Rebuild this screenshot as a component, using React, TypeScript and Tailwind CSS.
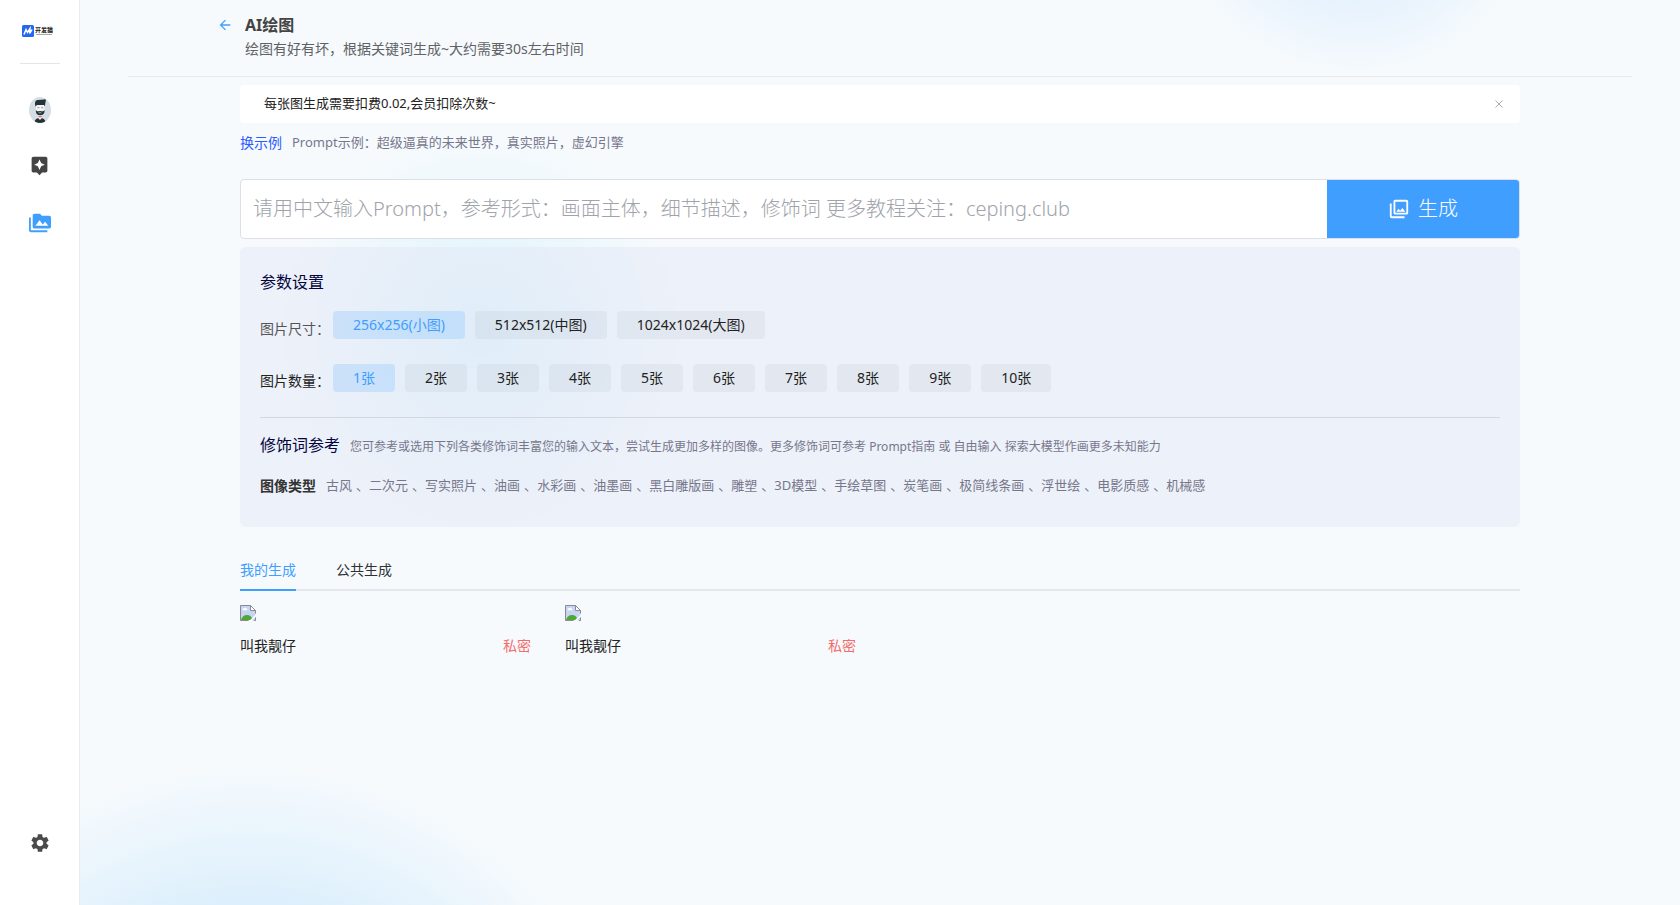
import { useState } from "react";
import { MdArrowBack, MdAssistant, MdOutlinePhotoLibrary, MdPermMedia, MdSettings } from "react-icons/md";

const sizes = ["256x256(小图)", "512x512(中图)", "1024x1024(大图)"];
const counts = [1, 2, 3, 4, 5, 6, 7, 8, 9, 10];
const imageTypes = [
  "古风", "二次元", "写实照片", "油画", "水彩画", "油墨画", "黑白雕版画", "雕塑",
  "3D模型", "手绘草图", "炭笔画", "极简线条画", "浮世绘", "电影质感", "机械感",
];
const works = [
  { id: 1, author: "叫我靓仔", status: "私密" },
  { id: 2, author: "叫我靓仔", status: "私密" },
];

function Logo() {
  return (
    <div className="flex items-center gap-px" aria-label="开发猫">
      <svg viewBox="0 0 12 12" className="size-3">
        <rect width="12" height="12" rx="1.5" fill="#2468f2" />
        <path d="M2 9.5 4 4.5 5.5 7.5 8 3.5 7.8 8.5 10 4.5" fill="none" stroke="#fff" strokeWidth="1.5" />
      </svg>
      <div className="flex flex-col items-center">
        <span className="text-[6px] font-bold leading-[7px] text-[#222]">开发猫</span>
        <span className="h-px w-4 bg-[#aaa]" />
      </div>
    </div>
  );
}

function Avatar() {
  return (
    <svg viewBox="0 0 22 26" className="h-[26px] w-[22px]" aria-label="头像" role="img">
      <clipPath id="face-clip"><ellipse cx="11" cy="13" rx="11" ry="13" /></clipPath>
      <g clipPath="url(#face-clip)">
        <rect width="22" height="26" fill="#d6dee5" />
        <path d="M5.500 26c0-3.500 2-5 5.500-5s5.500 1.500 5.500 5z" fill="#263238" />
        <path d="M9 17h4v4l-2 2-2-2z" fill="#eee" />
        <path d="M7 7h8.500v7c0 3-2 4.500-4.200 4.500S7 17 7 14z" fill="#f3f3f3" />
        <path d="M8.500 10.700h1.800M12.300 10.700h1.800" stroke="#777" strokeWidth=".8" />
        <path d="M6.800 13c1.500 2 2.500 1 4.300 1s3 1 4.500-1c.2 3.500-1.500 5.300-4.500 5.300S6.600 16.500 6.800 13z" fill="#263238" />
        <path d="M9.500 15.800h3" stroke="#ddd" strokeWidth=".7" />
        <path d="M9.500 19h3.200v1.300H9.500z" fill="#e0704a" />
        <path d="M6.500 9.500C5.300 5 6.500 3 9 3l6-.5c2-.8 2.200 1 1.500 2.500L15.800 9.500 15 8H8z" fill="#263238" />
      </g>
    </svg>
  );
}

function BrokenImage() {
  return (
    <svg viewBox="0 0 16 16" className="size-4" role="img" aria-label="图片">
      <path d="M.5.5h10l5 5v10H.5z" fill="#c6d5f5" />
      <path d="M2.500 4.500c0-1 1-1.500 1.800-1.200.6-1 2.200-.6 2.300.5 1 0 1.200 1.200.4 1.400H3c-.4 0-.5-.4-.5-.7z" fill="#fff" />
      <path d="M1 15c1-4 4-5.500 7-5 2 .3 3.500 1.500 5 5z" fill="#4ea832" />
      <path d="M.5 15.500V.5h10l5 5v3M.5 15.500h8M14 15.500h1.500v-3" fill="none" stroke="#8b8b8b" />
      <path d="M10.500.5v5h5z" fill="#fff" stroke="#8b8b8b" />
      <path d="m9 16 7-6.500V11l-4.500 5z" fill="#fff" />
    </svg>
  );
}

type ChipProps = { label: string; active: boolean; onClick: () => void };

function Chip({ label, active, onClick }: ChipProps) {
  return (
    <button
      type="button"
      aria-pressed={active}
      onClick={onClick}
      className={
        active
          ? "h-7 rounded bg-[#409eff]/18 px-5 text-sm text-[#409eff]"
          : "h-7 rounded bg-[#78828c]/8 px-5 text-sm text-[#222]"
      }
    >
      {label}
    </button>
  );
}

export default function App() {
  const [size, setSize] = useState(sizes[0]);
  const [count, setCount] = useState(1);
  const [tab, setTab] = useState("我的生成");
  const [notice, setNotice] = useState(true);

  return (
    <div className="flex min-h-screen bg-[#f6fafd] font-['Noto_Sans','Noto_Sans_CJK_SC',sans-serif] text-[#222]">
      <aside className="flex w-20 shrink-0 flex-col items-center border-r border-[#ebebeb] bg-white pt-6 pb-[51px]">
        <a href="#home" className="flex h-[39px] items-start pt-px pr-1"><Logo /></a>
        <div className="h-px w-10 bg-[#e5e5e5]" />
        <nav className="flex flex-1 flex-col items-center pt-[33px]">
          <a href="#profile"><Avatar /></a>
          <a href="#chat" aria-label="对话" className="mt-8 text-[#444]"><MdAssistant size={21} /></a>
          <a href="#images" aria-label="绘图" className="mt-9 text-[#409eff]"><MdPermMedia size={22} /></a>
          <a href="#settings" aria-label="设置" className="mt-auto text-[#4a4a4a]"><MdSettings size={22} /></a>
        </nav>
      </aside>

      <main className="min-w-0 flex-1 bg-[radial-gradient(circle_at_170px_calc(100%+251px),#dceffc_251px,#f6fafd_391px,transparent_392px),radial-gradient(circle_at_1275px_-112px,#e6f2fd_112px,transparent_187px),radial-gradient(circle_at_400px_330px,#dcf3fc,transparent_200px)] px-12">
        <header className="flex h-[77px] items-start border-b border-[#e7eaed] pt-3 pl-[89px]">
          <a href="#back" aria-label="返回" className="mt-[5px] text-[#409eff]"><MdArrowBack size={16} /></a>
          <div className="ml-3">
            <h1 className="text-base leading-[26px] font-bold text-[#444]">AI绘图</h1>
            <p className="text-sm leading-[22px] text-[#606266]">绘图有好有坏，根据关键词生成~大约需要30s左右时间</p>
          </div>
        </header>

        <div className="mx-auto max-w-[1280px] pt-2">
          {notice && (
            <div className="flex h-[38px] items-center justify-between rounded bg-white pr-4 pl-6">
              <p className="text-[13px]">每张图生成需要扣费0.02,会员扣除次数~</p>
              <button type="button" aria-label="关闭" onClick={() => setNotice(false)} className="p-px text-[#a8abb2]">
                <svg viewBox="0 0 8 8" className="size-2"><path d="m.5.5 7 7m0-7-7 7" stroke="currentColor" /></svg>
              </button>
            </div>
          )}
          <div className="flex h-10 items-center gap-[10px]">
            <button type="button" className="text-sm text-[#2b5cff]">换示例</button>
            <p className="text-[13px] text-[#77778c]">Prompt示例：超级逼真的未来世界，真实照片，虚幻引擎</p>
          </div>

          <form className="mt-4 flex h-[60px] overflow-hidden rounded border border-[#dcdfe6] bg-white" onSubmit={(e) => e.preventDefault()}>
            <input
              aria-label="Prompt"
              className="min-w-0 flex-1 px-3 text-xl font-light outline-none placeholder:text-[#a0a3aa]"
              placeholder="请用中文输入Prompt，参考形式：画面主体，细节描述，修饰词 更多教程关注：ceping.club"
            />
            <button type="submit" className="flex w-48 items-center justify-center gap-2 bg-[#409eff] text-xl font-light text-white">
              <MdOutlinePhotoLibrary size={22} />生成
            </button>
          </form>

          <section className="mt-2 rounded-md bg-[#e4e7f5]/50 px-5 pt-5 pb-[27px]">
            <h2 className="text-base leading-[30px] text-[#03053d]">参数设置</h2>
            <div className="mt-[14px] flex h-7 items-start">
              <span className="w-[73px] shrink-0 pt-2 text-sm whitespace-nowrap text-[#555]">图片尺寸：</span>
              <div className="flex gap-[10px]">
                {sizes.map((s) => <Chip key={s} label={s} active={s === size} onClick={() => setSize(s)} />)}
              </div>
            </div>
            <div className="mt-[25px] flex h-7 items-start">
              <span className="w-[73px] shrink-0 pt-[7px] text-sm whitespace-nowrap">图片数量：</span>
              <div className="flex gap-[10px]">
                {counts.map((c) => <Chip key={c} label={`${c}张`} active={c === count} onClick={() => setCount(c)} />)}
              </div>
            </div>
            <div className="mt-[25px] border-t border-[#d3d7e0] pt-3">
              <div className="flex items-baseline gap-[10px]">
                <h2 className="text-base leading-[30px] text-[#03053d]">修饰词参考</h2>
                <p className="text-xs text-[#77778c]">您可参考或选用下列各类修饰词丰富您的输入文本，尝试生成更加多样的图像。更多修饰词可参考 Prompt指南 或 自由输入 探索大模型作画更多未知能力</p>
              </div>
              <div className="mt-3 flex h-7 items-center gap-[10px]">
                <h3 className="text-sm font-bold text-[#333]">图像类型</h3>
                <ul className="flex text-[13px] text-[#77778c]">
                  {imageTypes.map((name, i) => (
                    <li key={name} className="flex gap-1">
                      <button type="button">{name}</button>
                      {i < imageTypes.length - 1 && <span>、</span>}
                    </li>
                  ))}
                </ul>
              </div>
            </div>
          </section>

          <div role="tablist" className="mt-6 flex gap-10 border-b-2 border-[#e4e7ed]">
            {["我的生成", "公共生成"].map((t) => (
              <button
                key={t}
                type="button"
                role="tab"
                aria-selected={t === tab}
                onClick={() => setTab(t)}
                className={
                  t === tab
                    ? "-mb-0.5 h-10 border-b-2 border-[#409eff] text-sm text-[#409eff]"
                    : "-mb-0.5 h-10 border-b-2 border-transparent text-sm text-[#303133]"
                }
              >
                {t}
              </button>
            ))}
          </div>
          <div className="mt-[14px] grid grid-cols-4 gap-5">
            {works.map((w) => (
              <article key={w.id}>
                <BrokenImage />
                <div className="mt-[14px] flex items-center justify-between pr-[14px] text-sm leading-[22px]">
                  <span>{w.author}</span>
                  <span className="text-[#f56c6c]">{w.status}</span>
                </div>
              </article>
            ))}
          </div>
        </div>
      </main>
    </div>
  );
}
